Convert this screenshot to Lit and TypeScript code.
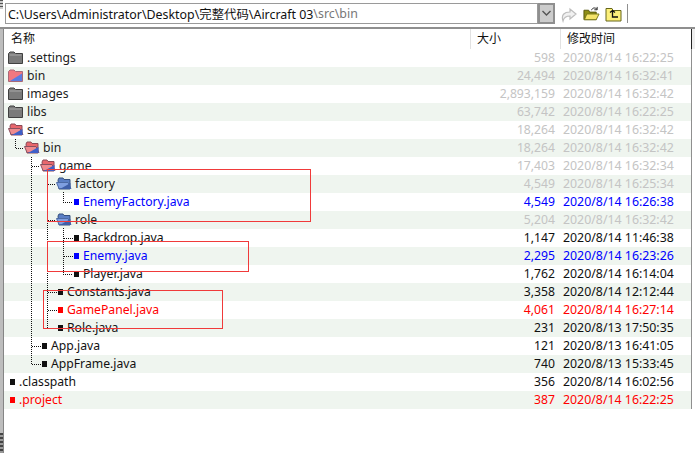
import { LitElement, css, html, svg } from 'lit';
import { customElement } from 'lit/decorators.js';

type Row = {
	name: string;
	level: number;
	size: string;
	date: string;
	icon: 'gray' | 'red' | 'redOpen' | 'blueOpen' | 'file';
	tone?: 'dim' | 'blue' | 'red';
};

const rows: Row[] = [
	{ name: '.settings', level: 0, size: '598', date: '2020/8/14 16:22:25', icon: 'gray', tone: 'dim' },
	{ name: 'bin', level: 0, size: '24,494', date: '2020/8/14 16:32:41', icon: 'red', tone: 'dim' },
	{ name: 'images', level: 0, size: '2,893,159', date: '2020/8/14 16:32:42', icon: 'gray', tone: 'dim' },
	{ name: 'libs', level: 0, size: '63,742', date: '2020/8/14 16:22:25', icon: 'gray', tone: 'dim' },
	{ name: 'src', level: 0, size: '18,264', date: '2020/8/14 16:32:42', icon: 'redOpen', tone: 'dim' },
	{ name: 'bin', level: 1, size: '18,264', date: '2020/8/14 16:32:42', icon: 'redOpen', tone: 'dim' },
	{ name: 'game', level: 2, size: '17,403', date: '2020/8/14 16:32:34', icon: 'redOpen', tone: 'dim' },
	{ name: 'factory', level: 3, size: '4,549', date: '2020/8/14 16:25:34', icon: 'blueOpen', tone: 'dim' },
	{ name: 'EnemyFactory.java', level: 4, size: '4,549', date: '2020/8/14 16:26:38', icon: 'file', tone: 'blue' },
	{ name: 'role', level: 3, size: '5,204', date: '2020/8/14 16:32:42', icon: 'blueOpen', tone: 'dim' },
	{ name: 'Backdrop.java', level: 4, size: '1,147', date: '2020/8/14 11:46:38', icon: 'file' },
	{ name: 'Enemy.java', level: 4, size: '2,295', date: '2020/8/14 16:23:26', icon: 'file', tone: 'blue' },
	{ name: 'Player.java', level: 4, size: '1,762', date: '2020/8/14 16:14:04', icon: 'file' },
	{ name: 'Constants.java', level: 3, size: '3,358', date: '2020/8/14 12:12:44', icon: 'file' },
	{ name: 'GamePanel.java', level: 3, size: '4,061', date: '2020/8/14 16:27:14', icon: 'file', tone: 'red' },
	{ name: 'Role.java', level: 3, size: '231', date: '2020/8/13 17:50:35', icon: 'file' },
	{ name: 'App.java', level: 2, size: '121', date: '2020/8/13 16:41:05', icon: 'file' },
	{ name: 'AppFrame.java', level: 2, size: '740', date: '2020/8/13 15:33:45', icon: 'file' },
	{ name: '.classpath', level: 0, size: '356', date: '2020/8/14 16:02:56', icon: 'file' },
	{ name: '.project', level: 0, size: '387', date: '2020/8/14 16:22:25', icon: 'file', tone: 'red' },
];

// tree guides, in page coordinates
const guides = [
	'M15.5 139V148.5H24',
	'M31.5 157V364.5H41',
	'M31.5 166.5H40',
	'M31.5 346.5H41',
	'M47.5 175V328.5H57',
	'M47.5 184.5H56',
	'M47.5 220.5H56',
	'M47.5 292.5H57',
	'M47.5 310.5H57',
	'M63.5 192V202.5H73',
	'M63.5 228V274.5H73',
	'M63.5 238.5H73',
	'M63.5 256.5H73',
];

const marks = [
	{ x: 47, y: 169, w: 264, h: 53 },
	{ x: 47, y: 241, w: 202, h: 31 },
	{ x: 43, y: 290, w: 180, h: 39 },
];

function folder(kind: Row['icon']) {
	if (kind === 'gray') {
		return html`<svg class="ico" width="15" height="14" viewBox="0 1 15 14">
			<path d="M0.5 3.5 2 2H6L7.5 3.5H14.5V13.5H0.5Z" fill="#7a7a7a" stroke="#404040"/>
			<path d="M1.5 5H13.5" stroke="#a8a8a8"/>
		</svg>`;
	}
	if (kind === 'red') {
		return html`<svg class="ico" width="15" height="14" viewBox="0 1 15 14">
			<path d="M0.5 3.5 2 2H6L7.5 3.5H14.5V13.5H0.5Z" fill="#f27880" stroke="#a86a78"/>
			<path d="M14 5.5V13H2Z" fill="#5c7ce0"/>
		</svg>`;
	}
	const blue = kind === 'blueOpen';
	return html`<svg class="ico open" width="16" height="14" viewBox="0 1 16 14">
		<path d="M2 4 3 2H7L8 3.5H14V13H3Z" fill=${blue ? '#5a7ec4' : '#e8666c'} stroke=${blue ? '#35507f' : '#8a4a56'}/>
		<path d="M0.5 6.5H12L15 12.5H3Z" fill=${blue ? '#7f9fe0' : '#f08a8e'} stroke=${blue ? '#4c6aa4' : '#8a5060'}/>
		<path d="M14.5 7V13H4Z" fill=${blue ? '#3f5fa8' : '#3f5fc8'}/>
	</svg>`;
}

@customElement('app-root')
export class AppRoot extends LitElement {
	static styles = css`
		:host {
			display: block;
			position: relative;
			width: 695px;
			height: 453px;
			overflow: hidden;
			background: #fff;
			font-family: "Noto Sans", "Noto Sans CJK SC", sans-serif;
			font-size: 12.2px;
			color: #111;
		}

		.toolbar {
			height: 29px;
			box-sizing: border-box;
			display: flex;
			align-items: center;
			gap: 5px;
			padding-left: 5px;
			border-bottom: 2px solid #8f8f8f;
			background: repeating-linear-gradient(#555 0 1px, #ccc 1px 3px) 0 0 / 3px 9px no-repeat #fff;
		}

		.address {
			width: 533px;
			height: 21px;
			box-sizing: border-box;
			display: flex;
			align-items: center;
			padding-left: 2px;
			border: 1px solid #9a9a9a;
			white-space: nowrap;
			font-size: 12.4px;
		}

		.address .rest { color: #777; }

		.combo {
			margin-left: -5px;
			width: 17px;
			height: 21px;
			box-sizing: border-box;
			display: flex;
			align-items: center;
			justify-content: center;
			background: #ccc;
			border: 2px solid #8f8f8f;
		}

		.tool { display: block; }

		.sep {
			width: 1px;
			height: 19px;
			background: #8f8f8f;
		}

		.body {
			display: flex;
		}

		.edge {
			width: 4px;
			height: 424px;
			flex: none;
			background:
				repeating-linear-gradient(#444 0 2px, #999 2px 4px) 0 100% / 3px 20px no-repeat,
				linear-gradient(90deg, #bdbdbd 0 3px, #858585 3px 4px);
		}

		.table {
			width: 688px;
			flex: none;
		}

		.corner {
			width: 3px;
			height: 20px;
			flex: none;
			background: #eee;
		}

		.head {
			display: grid;
			grid-template-columns: 466px 90px 1fr;
			height: 20px;
			box-sizing: border-box;
			border-right: 1px solid #222;
			font-size: 12px;
		}

		.head span {
			line-height: 20px;
			padding-left: 7px;
			box-sizing: border-box;
		}

		.head span + span {
			border-left: 1px solid #e2e2e2;
			padding-left: 6px;
		}

		.rows {
			border-right: 1px solid #8f8f8f;
		}

		.row {
			display: grid;
			grid-template-columns: 466px 85px 1fr;
			height: 18px;
			line-height: 18px;
			white-space: nowrap;
		}

		.row:nth-child(even) { background: #eff5ef; }

		.name {
			display: flex;
			align-items: center;
		}

		.ico { flex: none; margin-right: 4px; }
		.ico.open { margin-right: 3px; }

		.bullet {
			flex: none;
			width: 5px;
			height: 6px;
			margin: 0 4px 0 2px;
			background: currentColor;
		}

		.size { text-align: right; }

		.date {
			padding-left: 8px;
			font-size: 12.35px;
		}

		.dim { color: #c4c4c4; }
		.dim .name { color: #222; }
		.blue { color: #0000ff; }
		.red { color: #ff0000; }

		.guides {
			position: absolute;
			left: 0;
			top: 0;
			pointer-events: none;
		}

		.mark {
			position: absolute;
			box-sizing: border-box;
			border: 1px solid #f03a3a;
		}
	`;

	render() {
		return html`
			<div class="toolbar">
				<div class="address">C:\\Users\\Administrator\\Desktop\\完整代码\\Aircraft 03<span class="rest">\\src\\bin</span></div>
				<div class="combo">
					<svg width="11" height="7" viewBox="0 0 11 7"><path d="M1.5 1 5.5 5 9.5 1" fill="none" stroke="#555" stroke-width="1.4"/></svg>
				</div>
				<svg class="tool" width="18" height="18" viewBox="0 0 18 18">
					<path d="M3 16C1 10 4 7 10 7V4L16 9 10 14V11C6 11 4 12 3 16Z" fill="#f1f1f1" stroke="#bdbdbd" stroke-width="1.2"/>
				</svg>
				<svg class="tool" width="17" height="18" viewBox="0 0 18 18">
					<path d="M1 5H6L7 7H14V15H1Z" fill="#8e8e16" stroke="#55550c"/>
					<path d="M1.5 15 4 9H17L14 15Z" fill="#f4e46a" stroke="#77771a"/>
					<path d="M9 5C10 2 13 2 15 4M15 1.5V4.5H12" fill="none" stroke="#222"/>
				</svg>
				<svg class="tool" width="17" height="16" viewBox="0 0 17 16">
					<path d="M1 2.5H7L8 4.5H16V15H1Z" fill="#fdf07a" stroke="#66661a"/>
					<path d="M5 6.5 7.5 4.5 10 6.5M7.5 5V11H13" fill="none" stroke="#111" stroke-width="1.3"/>
				</svg>
				<div class="sep"></div>
			</div>
			<div class="body">
				<div class="edge"></div>
				<div class="table">
					<div class="head"><span>名称</span><span>大小</span><span>修改时间</span></div>
					<div class="rows">${rows.map((r) => this.renderRow(r))}</div>
				</div>
				<div class="corner"></div>
			</div>
			<svg class="guides" width="695" height="453" shape-rendering="crispEdges">
				${guides.map((d) => svg`<path d=${d} fill="none" stroke="#111" stroke-dasharray="1 1"/>`)}
			</svg>
			${marks.map((m) => html`<div class="mark" style="left:${m.x}px;top:${m.y}px;width:${m.w}px;height:${m.h}px"></div>`)}
		`;
	}

	private renderRow(r: Row) {
		const isFile = r.icon === 'file';
		const pad = 4 + 16 * r.level;
		return html`<div class="row ${r.tone ?? ''}">
			<div class="name" style="padding-left:${pad}px">
				${isFile ? html`<span class="bullet"></span>` : folder(r.icon)}${r.name}
			</div>
			<div class="size">${r.size}</div>
			<div class="date">${r.date}</div>
		</div>`;
	}
}
